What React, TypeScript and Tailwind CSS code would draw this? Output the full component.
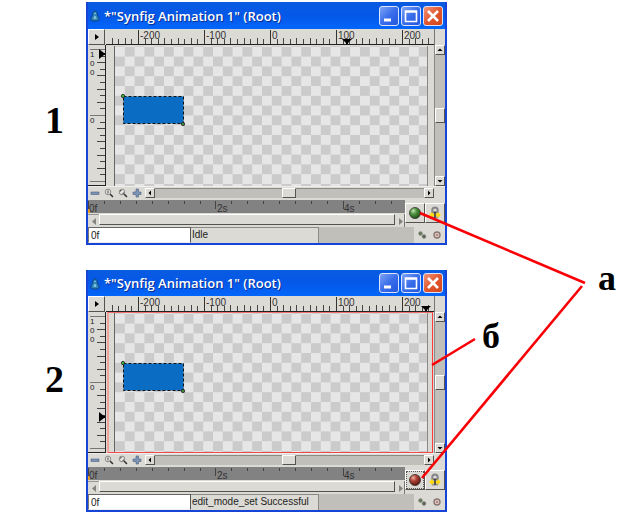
import { useId } from "react";
import type { ReactNode } from "react";

type Pane = {
  id: string;
  label: string;
  labelClass: string;
  titleClass: string;
  status: string;
  animate: boolean;
  pointerX: number;
  pointerY: number;
};

const panes: Pane[] = [
  { id: "one", label: "1", labelClass: "pt-[98px]", titleClass: "h-[27px]", status: "Idle", animate: false, pointerX: 241, pointerY: 9 },
  { id: "two", label: "2", labelClass: "pt-[89px]", titleClass: "h-[26px]", status: "edit_mode_set Successful", animate: true, pointerX: 320, pointerY: 105 },
];

const STEP = 6.6;
const raised = "border border-t-white border-l-white border-r-[#55534e] border-b-[#55534e] bg-[#dcdad5]";

function range(from: number, to: number) {
  return Array.from({ length: to - from + 1 }, (_, i) => from + i);
}

function HorizontalRuler({ pointer }: { pointer: number }) {
  return (
    <svg className="block h-4 w-full" aria-hidden="true">
      {range(-4, 49).map((i) => {
        const x = Math.round(32 + i * STEP);
        const major = i % 10 === 0;
        return (
          <g key={i}>
            <rect x={x} y={major ? 1 : i % 2 ? 10 : 9} width="1" height={major ? 14 : i % 2 ? 5 : 6} fill={major ? "#333" : "#444"} />
            {major && (
              <text x={x + 2} y="10" fontSize="10" fill="#333">
                {-200 + i * 10}
              </text>
            )}
          </g>
        );
      })}
      <path d={`M${pointer - 5} 10h10l-4 4v1h-2v-1z`} fill="#000" />
      <rect x="0" y="15" width="100%" height="1" fill="#222" />
    </svg>
  );
}

function VerticalRuler({ pointer }: { pointer: number }) {
  return (
    <svg className="block h-[141px] w-[18px]" aria-hidden="true">
      {range(0, 20).map((i) => {
        const y = Math.round(4 + i * STEP);
        const major = i % 10 === 0;
        const len = major ? 15 : i % 2 ? 5 : 8;
        return <rect key={i} x={17 - len} y={y} width={len} height="1" fill={major ? "#777" : "#444"} />;
      })}
      <g fontSize="8" fill="#222">
        <text x="2" y="12">1</text>
        <text x="2" y="21">0</text>
        <text x="2" y="30">0</text>
        <text x="2" y="78">0</text>
      </g>
      <path d={`M11 ${pointer - 5}v10l5-4h1v-2h-1z`} fill="#000" />
      <rect x="17" y="0" width="1" height="141" fill="#222" />
      <rect x="0" y="140" width="18" height="1" fill="#222" />
    </svg>
  );
}

function Artwork() {
  const checker = useId();
  return (
    <svg className="block h-full w-full" role="img" aria-label="Canvas with a blue rectangle">
      <defs>
        <pattern id={checker} x="9" y="0.8" width="19.6" height="19.6" patternUnits="userSpaceOnUse">
          <rect width="19.6" height="19.6" fill="#e6e6e6" />
          <rect x="9.8" width="9.8" height="9.8" fill="#cbcbcb" />
          <rect y="9.8" width="9.8" height="9.8" fill="#cbcbcb" />
        </pattern>
      </defs>
      <rect width="100%" height="100%" fill={`url(#${checker})`} />
      <rect width="8" height="100%" fill="#dcdad5" />
      <rect x="8" width="1" height="100%" fill="#666" />
      <rect x="17.5" y="50.5" width="60" height="27" fill="#0a6cc2" stroke="#111" strokeDasharray="3 2" />
      <circle cx="17" cy="50" r="1.7" fill="#3fae3a" stroke="#222" strokeWidth="0.8" />
      <circle cx="77" cy="78" r="1.7" fill="#3f8a3a" stroke="#222" strokeWidth="0.8" />
    </svg>
  );
}

const arrows = {
  left: "M5 1.500v5L2.500 4z",
  right: "M3 1.500v5L5.500 4z",
  up: "M1.500 5h5L4 2.500z",
  down: "M1.500 3h5L4 5.500z",
};

function ArrowButton({ dir }: { dir: keyof typeof arrows }) {
  return (
    <button type="button" aria-label={`Scroll ${dir}`} className={`flex size-[10px] shrink-0 items-center justify-center ${raised}`}>
      <svg viewBox="0 0 8 8" className="size-2">
        <path d={arrows[dir]} fill="#000" />
      </svg>
    </button>
  );
}

function ToolButton({ name, children }: { name: string; children: ReactNode }) {
  return (
    <button type="button" aria-label={name} className="flex h-3 w-[14px] items-center justify-center">
      <svg viewBox="0 0 10 10" className="size-[10px]">{children}</svg>
    </button>
  );
}

function Magnifier({ mark }: { mark: string }) {
  return (
    <>
      <path d="M6 6l2.500 2.500" stroke="#333" strokeWidth="1.600" strokeLinecap="round" />
      <circle cx="4" cy="4" r="2.800" fill="#e4e4e2" stroke="#8a8a88" />
      <path d={mark} stroke="#444" fill="none" />
    </>
  );
}

function CaptionButton({ name, close, children }: { name: string; close?: boolean; children: ReactNode }) {
  return (
    <button
      type="button"
      aria-label={name}
      className={`flex size-5 items-center justify-center rounded-[3px] border border-[#dbe4fb] ${
        close ? "bg-linear-to-br from-[#ef9478] via-[#e2562e] to-[#d2451c]" : "bg-linear-to-br from-[#7fa3f5] via-[#3a6dea] to-[#2457dc]"
      }`}
    >
      <svg viewBox="0 0 18 18" className="size-[18px]" fill="none" stroke="#fff">{children}</svg>
    </button>
  );
}

function TitleBar({ heightClass }: { heightClass: string }) {
  return (
    <header
      className={`flex ${heightClass} items-center gap-1 bg-linear-to-b from-[#0a5be0] via-[#0458e8] to-[#0366fb] pr-[2px] pl-[2px]`}
    >
      <svg viewBox="0 0 12 14" className="mt-px h-3 w-[10px] shrink-0" aria-hidden="true">
        <path d="M6 1C3.600 1 3.500 4 3 6 2.600 8 1 9 1 11c0 1.600 2.500 2 5 2s5-.4 5-2c0-2-1.600-3-2-5C8.500 4 8.400 1 6 1z" fill="#2c83b8" stroke="#123a6a" />
        <path d="M4.500 8.500c0-2 3-2 3 0v2h-3z" fill="#7ec0de" />
        <circle cx="6" cy="4" r="1" fill="#8fd0e8" />
      </svg>
      <h2 className="min-w-0 flex-1 truncate font-['Open_Sans','Noto_Sans',sans-serif] text-[13px] leading-5 font-semibold text-white [text-shadow:1px_1px_0_#0a2f94]">
        *"Synfig Animation 1" (Root)
      </h2>
      <div className="flex gap-[2px]">
        <CaptionButton name="Minimize"><path d="M4 13h7" strokeWidth="3" /></CaptionButton>
        <CaptionButton name="Maximize"><path d="M3.500 4h11v10.500h-11zM3 5h12" strokeWidth="1.600" /></CaptionButton>
        <CaptionButton name="Close" close><path d="M4 4l10 10M14 4L4 14" strokeWidth="2.600" /></CaptionButton>
      </div>
    </header>
  );
}

function Timeline() {
  return (
    <svg className="block h-[14px] w-full bg-[#dcdad5]" aria-hidden="true">
      <rect width="100%" height="13" fill="#828282" />
      {range(0, 19).map((i) => (
        <rect key={i} x={Math.round(i * 15.93)} y="1" width="1" height={i % 8 ? 3 : 8} fill="#444" />
      ))}
      <rect y="9" width="2" height="4" fill="#e8a020" />
      <g fontSize="10" fill="#333">
        <text x="1" y="12">0f</text>
        <text x="129" y="12">2s</text>
        <text x="256" y="12">4s</text>
      </g>
    </svg>
  );
}

function AnimateIcon({ on }: { on: boolean }) {
  const ball = useId();
  return (
    <svg viewBox="0 0 14 14" className="size-[14px]">
      <defs>
        <radialGradient id={ball} cx="0.35" cy="0.3" r="0.75">
          <stop offset="0" stopColor={on ? "#eeb0a4" : "#c4e6b4"} />
          <stop offset="0.4" stopColor={on ? "#b04436" : "#4f9440"} />
          <stop offset="1" stopColor={on ? "#521410" : "#1c4a16"} />
        </radialGradient>
      </defs>
      <circle cx="7" cy="7" r="5.500" fill={`url(#${ball})`} stroke="#33302c" strokeWidth="0.800" />
    </svg>
  );
}

function LockIcon() {
  return (
    <svg viewBox="0 0 14 14" className="size-[14px]">
      <path d="M4.300 6.500V4.200a2.700 2.700 0 0 1 5.400 0v2.300" fill="none" stroke="#85858a" strokeWidth="2" />
      <path d="M4 6h6v6H4z" fill="#b9b9bc" stroke="#77777c" strokeWidth="0.800" />
      <path d="M1 9l3.500-3.200v2h5v-2L13 9l-3.500 3.200v-2h-5v2z" fill="#ffdc10" />
      <path d="M5.500 5.800h3V7H7.800v5H6.200V7h-.7z" fill="#3c3e46" />
    </svg>
  );
}

function CanvasWindow({ pane }: { pane: Pane }) {
  return (
    <section className="min-w-0 border-x-2 border-b-2 border-[#1644d6] bg-[#dcdad5]">
      <TitleBar heightClass={pane.titleClass} />
      <div className="grid grid-cols-[18px_minmax(0,1fr)_11px]">
        <button type="button" aria-label="Canvas menu" className={`flex h-4 w-[17px] items-center justify-center ${raised}`}>
          <svg viewBox="0 0 8 8" className="size-2"><path d="M2 1v6l4-3z" fill="#000" /></svg>
        </button>
        <HorizontalRuler pointer={pane.pointerX} />
        <div className="border-l border-[#777] bg-[#dcdad5]" />

        <VerticalRuler pointer={pane.pointerY} />
        <div className="relative flex h-[141px] pt-px">
          <div className="min-w-0 flex-1">
            <Artwork />
          </div>
          <div className="w-[7px] border-l border-[#888]" />
          {pane.animate && (
            <span className="absolute inset-y-0 right-px left-px border border-l-2 border-t-[#f07070] border-r-[#ff3c3c] border-b-[#f04848] border-l-[#f2a29c]" />
          )}
        </div>
        <div className="flex flex-col border-l border-[#888] bg-[#c1bfb9]">
          <ArrowButton dir="up" />
          <div className="flex-[53]" />
          <div className={`h-[15px] w-[10px] ${raised}`} />
          <div className="flex-[54]" />
          <ArrowButton dir="down" />
        </div>
      </div>

      <div className="flex h-[14px] items-start border-t border-[#efeeea] pt-px pr-[11px]">
        <div className="flex h-[10px] items-center">
          <ToolButton name="Zoom out"><path d="M1 4h8v2.500H1z" fill="#7d94b4" stroke="#4a6080" strokeWidth="0.600" /></ToolButton>
          <ToolButton name="Zoom normal"><Magnifier mark="M4 2.500v3" /></ToolButton>
          <ToolButton name="Zoom fit"><Magnifier mark="M2.500 3.500v-1h1M5.500 4.500v1h-1" /></ToolButton>
          <ToolButton name="Zoom in"><path d="M4 1h2.500v3H9v2.500H6.500V9H4V6.500H1V4h3z" fill="#7d94b4" stroke="#4a6080" strokeWidth="0.600" /></ToolButton>
        </div>
        <div className="ml-px flex h-[10px] min-w-0 flex-1 bg-[#c1bfb9]">
          <ArrowButton dir="left" />
          <div className="flex-[127] border-t border-[#8c8a85]" />
          <div className={`w-[14px] ${raised}`} />
          <div className="flex-[128] border-t border-[#8c8a85]" />
          <ArrowButton dir="right" />
        </div>
      </div>

      <div className="flex h-[27px]">
        <div className="min-w-0 flex-1">
          <Timeline />
          <div className="flex h-[13px] bg-[#dcdad5]">
            <button type="button" aria-label="Earlier" className="flex w-[11px] items-center justify-center border-t border-[#9a9892]">
              <svg viewBox="0 0 8 8" className="size-2"><path d="M6 1v7L2 4.500z" fill="#85837e" /></svg>
            </button>
            <div className={`mb-[2px] min-w-0 flex-1 ${raised}`} />
            <button type="button" aria-label="Later" className="flex w-[10px] items-center justify-center border-r border-[#777]">
              <svg viewBox="0 0 8 8" className="size-2"><path d="M3 1v7l4-3.500z" fill="#85837e" /></svg>
            </button>
          </div>
        </div>
        <div className="flex h-[23px] pt-[3px]">
          <button type="button" aria-label="Animate editing mode" aria-pressed={pane.animate} className={`flex h-5 w-[20px] items-center justify-center ${raised}`}>
            <span className={pane.animate ? "flex size-4 items-center justify-center outline-1 outline-dotted outline-[#555]" : "flex size-4 items-center justify-center"}>
              <AnimateIcon on={pane.animate} />
            </span>
          </button>
          <button type="button" aria-label="Lock keyframes" className={`flex h-5 w-[20px] items-center justify-center ${raised}`}>
            <LockIcon />
          </button>
        </div>
      </div>

      <footer className="flex h-4 text-[10px] leading-[14px] text-[#222]">
        <input
          aria-label={`Current time, window ${pane.label}`}
          defaultValue="0f"
          className="h-4 w-[103px] border border-t-[#666] border-r-[#555] border-b-[#eee] border-l-[#777] bg-white pl-[2px] outline-none"
        />
        <p className="h-4 w-[128px] border-t border-r border-[#8c8a85] pl-px whitespace-nowrap">{pane.status}</p>
        <div className="h-4 min-w-0 flex-1 bg-[#c1bfb9]" />
        <div className="flex items-center gap-[5px] pr-[3px] pl-[3px]">
          <button type="button" aria-label="Refresh">
            <svg viewBox="0 0 10 10" className="size-[10px]">
              <circle cx="3.500" cy="3.500" r="1.900" fill="#66785c" stroke="#8a8a84" strokeWidth="0.600" />
              <circle cx="7" cy="6.500" r="1.900" fill="#5a6854" stroke="#8a8a84" strokeWidth="0.600" />
            </svg>
          </button>
          <button type="button" aria-label="Stop">
            <svg viewBox="0 0 10 10" className="size-[10px]">
              <circle cx="5" cy="5" r="3" fill="#dcc8c4" stroke="#8a7672" strokeWidth="1.400" />
              <path d="M4 4l2 2M6 4L4 6" stroke="#b0726c" strokeWidth="0.800" />
            </svg>
          </button>
        </div>
      </footer>
    </section>
  );
}

function Callouts() {
  return (
    <svg viewBox="0 0 240 519" className="pointer-events-none absolute top-0 right-0 h-[519px] w-[240px]">
      <g stroke="#fa0006" strokeWidth="2.600">
        <path d="M20 213L185 283" />
        <path d="M22 478L182 286" />
        <path d="M32 365L75 339" />
      </g>
      <g fontSize="36" fontWeight="700" className="font-['Liberation_Serif',serif]">
        <text x="198" y="290">а</text>
        <text x="82" y="348">б</text>
      </g>
    </svg>
  );
}

export default function App() {
  return (
    <main className="relative flex flex-col gap-[25px] bg-white pt-[2px] pb-[7px] font-['Liberation_Sans',Arial,sans-serif]">
      {panes.map((pane) => (
        <div key={pane.id} className="grid grid-cols-[86px_minmax(0,1fr)_193px]">
          <span className={`${pane.labelClass} pr-[22px] text-right font-['Liberation_Serif',serif] text-[38px] leading-10 font-bold text-black`}>
            {pane.label}
          </span>
          <CanvasWindow pane={pane} />
        </div>
      ))}
      <Callouts />
    </main>
  );
}
